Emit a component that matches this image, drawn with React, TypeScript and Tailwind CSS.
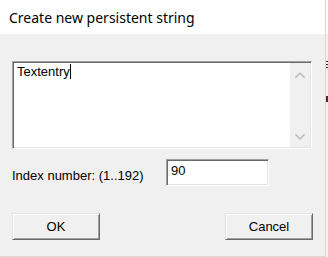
export default function App() {
  return (
    <div className="w-[328px] h-[257px] flex overflow-hidden bg-[#f0f0f0] font-['Liberation_Sans',Arial,sans-serif] text-black">
      <div className="w-[326px] h-full flex flex-col border-r border-[#d6d6d6] border-b border-b-[#dadada]">
        <div className="h-[34px] bg-white pl-[9px] flex items-center text-[14px] font-['Noto_Sans',sans-serif] text-[#000]">
          Create new persistent string
        </div>
        <div className="flex flex-col px-[12px] pt-[27px]">
          <div className="w-[300px] h-[88px] flex bg-white border border-t-[#a0a0a0] border-l-[#a0a0a0] border-r-white border-b-white shadow-[inset_1px_1px_0_#696969,inset_-1px_-1px_0_#e3e3e3] p-px">
            <div className="flex-1 pl-[3px] pt-[1px] text-[13px] leading-[15px]">
              <span>Textentry</span>
              <span className="inline-block w-px h-[15px] bg-black align-top"></span>
            </div>
            <div className="w-[20px] bg-[#f0f0f0] flex flex-col items-center justify-between pt-[9px] pb-[7px]">
              <svg width="10" height="6" viewBox="0 0 10 6">
                <path d="M0.5 5.5 L5 1 L9.5 5.5" stroke="#b0b0b0" strokeWidth="1.2" fill="none" />
              </svg>
              <svg width="10" height="6" viewBox="0 0 10 6">
                <path d="M0.5 0.5 L5 5 L9.5 0.5" stroke="#b0b0b0" strokeWidth="1.2" fill="none" />
              </svg>
            </div>
          </div>
          <div className="flex mt-[10px]">
            <div className="w-[154px] pt-[9px] text-[13px] leading-[15px]">Index number: (1..192)</div>
            <div className="w-[103px] h-[27px] bg-white border border-t-[#a0a0a0] border-l-[#a0a0a0] border-r-white border-b-white shadow-[inset_1px_1px_0_#696969,inset_-1px_-1px_0_#e3e3e3] pl-[4px] pt-[3px] text-[13px] leading-[15px]">
              90
            </div>
          </div>
          <div className="flex justify-between mt-[27px]">
            <div className="w-[88px] h-[27px] flex items-center justify-center bg-[#f0f0f0] border border-t-[#e3e3e3] border-l-[#e3e3e3] border-r-[#696969] border-b-[#696969] shadow-[inset_1px_1px_0_#ffffff,inset_-1px_-1px_0_#a0a0a0] text-[13px]">
              OK
            </div>
            <div className="w-[88px] h-[27px] flex items-center justify-center bg-[#f0f0f0] border border-t-[#e3e3e3] border-l-[#e3e3e3] border-r-[#696969] border-b-[#696969] shadow-[inset_1px_1px_0_#ffffff,inset_-1px_-1px_0_#a0a0a0] text-[13px]">
              Cancel
            </div>
          </div>
        </div>
      </div>
      <div className="w-[2px] h-full flex flex-col">
        <div className="h-[34px] bg-white"></div>
        <div className="flex flex-col gap-[2px] mt-[27px]">
          <div className="h-px bg-[#333]"></div>
          <div className="h-px bg-[#333]"></div>
          <div className="h-px bg-[#333]"></div>
        </div>
        <div className="h-[6px] w-[2px] bg-[#5a2030] mt-[28px]"></div>
      </div>
    </div>
  );
}
